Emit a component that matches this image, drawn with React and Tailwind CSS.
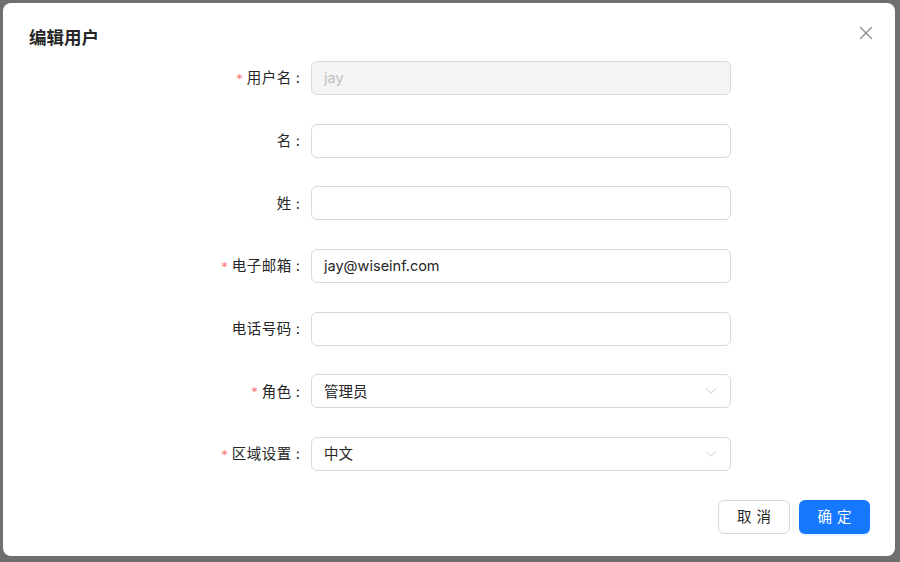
import React from 'react'
import { X, ChevronDown } from 'lucide-react'

const fields = [
  { label: '用户名', required: true, value: 'jay', disabled: true },
  { label: '名', required: false, value: '' },
  { label: '姓', required: false, value: '' },
  { label: '电子邮箱', required: true, value: 'jay@wiseinf.com' },
  { label: '电话号码', required: false, value: '' },
  { label: '角色', required: true, value: '管理员', select: true },
  { label: '区域设置', required: true, value: '中文', select: true },
]

const font = { fontFamily: 'Inter, "Noto Sans CJK SC", sans-serif' }

const FieldRow = ({ field }) => (
  <div className="flex items-center h-[34px]">
    <div className="w-[297px] flex justify-end items-center text-[14.5px] text-[#262626]">
      {field.required && <span className="text-[#ff7875] mr-[4px] text-[13px] leading-none mt-[2px]">*</span>}
      <span className="tracking-[0.5px]">{field.label}</span>
      <span className="ml-[4px]">:</span>
    </div>
    <div
      className={`ml-[11px] w-[420px] h-[34px] rounded-[6px] border border-[#d9d9d9] flex items-center pl-[12px] pr-[10px] text-[14.5px] ${
        field.disabled ? 'bg-[#f5f5f5] text-[#bfbfbf]' : 'bg-white text-[#262626]'
      }`}
    >
      <span className="flex-1">{field.value}</span>
      {field.select && <ChevronDown className="w-[18px] h-[18px] text-[#bfbfbf]" strokeWidth={1.1} />}
    </div>
  </div>
)

const App = () => {
  return (
    <div className="w-[900px] h-[562px] bg-[#6f6f6f] pt-[3px] pl-[3px] pr-[5px] pb-[6px]" style={font}>
      <div className="relative w-full h-full bg-white rounded-[8px] pt-[23px] pl-[26px] pr-[25px] pb-[22px] flex flex-col">
        {/* Header */}
        <h2 className="text-[17.5px] leading-[24px] font-bold text-[#262626]">编辑用户</h2>
        <button className="absolute top-[19px] right-[18px] text-[#8c8c8c]">
          <X className="w-[22px] h-[22px]" strokeWidth={1.3} />
        </button>

        {/* Form */}
        <div className="-ml-[26px] mt-[11px] flex flex-col gap-[28.7px]">
          {fields.map((f) => (
            <FieldRow key={f.label} field={f} />
          ))}
        </div>

        {/* Footer */}
        <div className="mt-auto flex justify-end gap-[9px]">
          <button className="w-[72px] h-[34px] rounded-[6px] border border-[#d9d9d9] bg-white text-[14.5px] text-[#262626] tracking-[5px] pl-[5px]">
            取消
          </button>
          <button className="w-[71px] h-[34px] rounded-[6px] bg-[#1677ff] text-[14.5px] text-white tracking-[5px] pl-[5px] shadow-[0_2px_0_rgba(5,145,255,0.1)]">
            确定
          </button>
        </div>
      </div>
    </div>
  )
}

export default App
